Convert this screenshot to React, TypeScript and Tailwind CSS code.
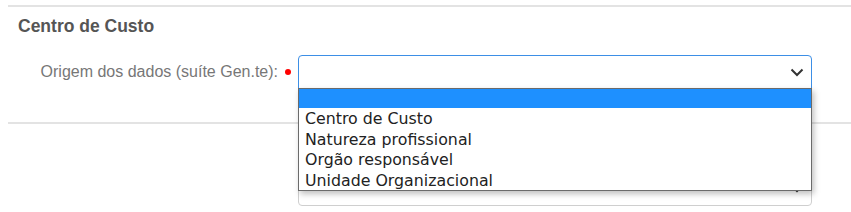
import { useState } from 'react';

const OPTIONS = ['', 'Centro de Custo', 'Natureza profissional', 'Orgão responsável', 'Unidade Organizacional'];

export default function App() {
  const [open] = useState(true);

  return (
    <div className="h-[212px] w-full overflow-hidden bg-white pl-2 font-['Liberation_Sans',Arial,sans-serif]">
      <div className="mt-[5px] border-t-2 border-[#e3e3e3]" />
      <h3 className="ml-[10px] mt-[9px] text-[17.5px] font-bold leading-[21px] text-[#555]">Centro de Custo</h3>

      <div className="mt-[18px] flex items-center">
        <label className="w-[270px] text-right text-[16px] text-[#777]">Origem dos dados (suíte Gen.te):</label>
        <span className="ml-[7px] h-[6px] w-[6px] rounded-full bg-[#ff0000]" />
        <div className="relative ml-[7px] w-[514px]">
          <div className="flex h-[34px] items-center justify-end rounded-t-[4px] border border-[#3d8fe6] bg-white pr-[7px]">
            <Chevron />
          </div>
          {open && (
            <ul className="absolute left-0 top-[33px] z-10 w-[514px] border border-[#6b6b6b] bg-white font-['DejaVu_Sans',sans-serif] text-[15.8px] text-[#222] shadow-[2px_3px_6px_rgba(0,0,0,0.25)]">
              {OPTIONS.map((o, i) => (
                <li
                  key={i}
                  className={
                    i === 0
                      ? 'h-[19px] bg-[#1e90ff]'
                      : 'h-[20.5px] pl-[6px] pt-[1px] leading-[19.5px]'
                  }
                >
                  {o}
                </li>
              ))}
            </ul>
          )}
        </div>
      </div>

      <div className="mt-[33px] border-t-2 border-[#e3e3e3]" />

      <div className="mt-[47px] flex">
        <div className="ml-[290px] flex h-[35px] w-[514px] items-center justify-end rounded-[4px] border border-[#cfcfcf] bg-white pr-[7px]">
          <Chevron />
        </div>
      </div>
    </div>
  );
}

function Chevron() {
  return (
    <svg width="14" height="9" viewBox="0 0 14 9" fill="none">
      <path d="M1.5 1.5 L7 7 L12.5 1.5" stroke="#333" strokeWidth="2" />
    </svg>
  );
}
